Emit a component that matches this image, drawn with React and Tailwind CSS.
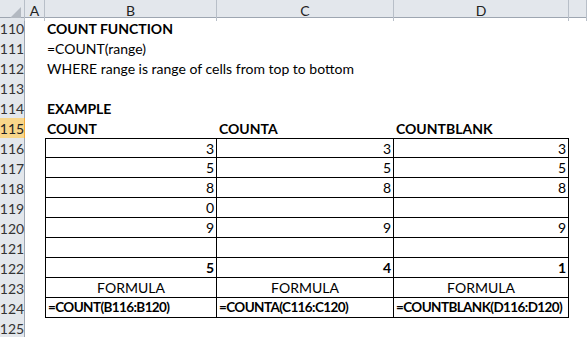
import React from 'react';

const font = { fontFamily: 'Lato, "Open Sans", sans-serif' };

// rows 110-125: [rowNo, cells B, C, D]
// cell: { t: text, b: bold, a: 'l' | 'r' | 'c' }
const rows = [
  { n: 110, b: { t: 'COUNT FUNCTION', b: true } },
  { n: 111, b: { t: '=COUNT(range)' } },
  { n: 112, b: { t: 'WHERE range is range of cells from top to bottom', over: true } },
  { n: 113 },
  { n: 114, b: { t: 'EXAMPLE', b: true } },
  { n: 115, sel: true, b: { t: 'COUNT', b: true }, c: { t: 'COUNTA', b: true }, d: { t: 'COUNTBLANK', b: true } },
  { n: 116, table: true, top: true, b: { t: '3', a: 'r' }, c: { t: '3', a: 'r' }, d: { t: '3', a: 'r' } },
  { n: 117, table: true, b: { t: '5', a: 'r' }, c: { t: '5', a: 'r' }, d: { t: '5', a: 'r' } },
  { n: 118, table: true, b: { t: '8', a: 'r' }, c: { t: '8', a: 'r' }, d: { t: '8', a: 'r' } },
  { n: 119, table: true, b: { t: '0', a: 'r' } },
  { n: 120, table: true, b: { t: '9', a: 'r' }, c: { t: '9', a: 'r' }, d: { t: '9', a: 'r' } },
  { n: 121, table: true },
  { n: 122, table: true, b: { t: '5', a: 'r', b: true }, c: { t: '4', a: 'r', b: true }, d: { t: '1', a: 'r', b: true } },
  { n: 123, table: true, b: { t: 'FORMULA', a: 'c' }, c: { t: 'FORMULA', a: 'c' }, d: { t: 'FORMULA', a: 'c' } },
  { n: 124, table: true, tight: true, b: { t: '=COUNT(B116:B120)', b: true }, c: { t: '=COUNTA(C116:C120)', b: true }, d: { t: '=COUNTBLANK(D116:D120)', b: true } },
  { n: 125 },
];

const Cell = ({ cell, table, top, first, tight }) => {
  const align = cell?.a === 'r' ? 'justify-end' : cell?.a === 'c' ? 'justify-center' : 'justify-start';
  const border = table
    ? `border-r border-b border-black ${first ? 'border-l' : ''} ${top ? 'border-t' : ''}`
    : '';
  return (
    <div className={`h-[20px] flex items-center px-[2px] ${align} ${border} whitespace-nowrap ${cell?.over ? 'overflow-visible z-10' : 'overflow-hidden'}`}>
      {cell && (
        <span className={`${cell.b ? 'font-bold' : ''} ${tight ? 'text-[13.5px] tracking-[-0.6px]' : ''}`}>{cell.t}</span>
      )}
    </div>
  );
};

export default function App() {
  return (
    <div className="w-[587px] h-[337px] bg-white overflow-hidden text-[14px] text-black" style={font}>
      {/* column headers */}
      <div className="grid grid-cols-[25px_20px_172px_177px_175px_1fr] h-[18px] bg-[#e3e7ec] border-b border-[#9ea6b1] text-[#222] text-[14px]">
        <div className="relative border-r border-[#b8bfc8]">
          <div className="absolute right-[3px] bottom-[3px] w-0 h-0 border-l-[11px] border-l-transparent border-b-[11px] border-b-[#b3b9c1]" />
        </div>
        {['A', 'B', 'C', 'D', ''].map((l, i) => (
          <div key={i} className="flex items-center justify-center border-r border-[#b8bfc8]">{l}</div>
        ))}
      </div>

      {rows.map((r) => (
        <div key={r.n} className="grid grid-cols-[25px_20px_172px_177px_175px_1fr] h-[20px]">
          <div
            className={`flex items-center justify-center text-[14px] border-r ${
              r.sel
                ? 'bg-[#f8d68a] border-[#f0a83a] border-b text-[#222]'
                : 'bg-[#e3e7ec] border-[#9ea6b1] border-b-[#cdd3da] border-b text-[#333]'
            }`}
          >
            {r.n}
          </div>
          <div />
          <Cell cell={r.b} table={r.table} top={r.top} tight={r.tight} first />
          <Cell cell={r.c} table={r.table} top={r.top} tight={r.tight} />
          <Cell cell={r.d} table={r.table} top={r.top} tight={r.tight} />
          <div />
        </div>
      ))}
    </div>
  );
}
